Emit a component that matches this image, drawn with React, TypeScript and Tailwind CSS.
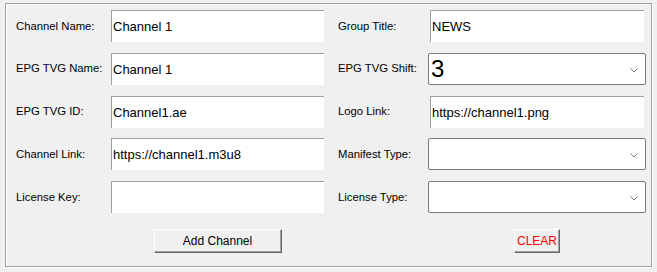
import React, { useState } from 'react';

const labelCls = "text-[11.3px] text-black self-center";
const inputCls =
  "h-[32px] w-[213px] bg-white border-t border-l border-[#a0a0a0] pl-[1px] text-[13px] text-black outline-none font-['Liberation_Sans',Arial,sans-serif]";

const Chevron: React.FC = () => (
  <svg width="8" height="5" viewBox="0 0 8 5" className="absolute right-[7px] top-[14px]">
    <path d="M0.5 0.5 L4 4 L7.5 0.5" fill="none" stroke="#7a7a7a" strokeWidth="1" />
  </svg>
);

const Combo: React.FC<{ value: string; big?: boolean }> = ({ value, big }) => (
  <div className="relative -ml-[2px] h-[32px] w-[218px] bg-white border border-[#7a7a7a] rounded-[2px] flex items-center">
    <span className={big ? "pl-[2px] text-[24px] leading-none" : "text-[13px]"}>{value}</span>
    <Chevron />
  </div>
);

const App: React.FC = () => {
  const [form, setForm] = useState({
    name: 'Channel 1',
    group: 'NEWS',
    epgName: 'Channel 1',
    epgId: 'Channel1.ae',
    logo: 'https://channel1.png',
    link: 'https://channel1.m3u8',
    key: '',
  });

  const set = (k: keyof typeof form) => (e: React.ChangeEvent<HTMLInputElement>) =>
    setForm({ ...form, [k]: e.target.value });

  return (
    <div className="w-[657px] h-[272px] bg-[#f0f0f0] pt-[3px] pl-[5px] font-['Liberation_Sans',Arial,sans-serif]">
      <div className="w-[647px] h-[264px] border border-[#a0a0a0] shadow-[inset_1px_1px_0_#ffffff,1px_1px_0_#ffffff] pt-[6px] pl-[10px]">
        {/* Fields */}
        <div className="grid grid-cols-[95px_213px_106px_214px] gap-y-[10.75px]">
          <span className={labelCls}>Channel Name:</span>
          <input className={inputCls} value={form.name} onChange={set('name')} />
          <span className={`${labelCls} pl-[14px]`}>Group Title:</span>
          <input className={`${inputCls} w-[214px]`} value={form.group} onChange={set('group')} />

          <span className={labelCls}>EPG TVG Name:</span>
          <input className={inputCls} value={form.epgName} onChange={set('epgName')} />
          <span className={`${labelCls} pl-[14px]`}>EPG TVG Shift:</span>
          <Combo value="3" big />

          <span className={labelCls}>EPG TVG ID:</span>
          <input className={inputCls} value={form.epgId} onChange={set('epgId')} />
          <span className={`${labelCls} pl-[14px]`}>Logo Link:</span>
          <input className={`${inputCls} w-[214px]`} value={form.logo} onChange={set('logo')} />

          <span className={labelCls}>Channel Link:</span>
          <input className={inputCls} value={form.link} onChange={set('link')} />
          <span className={`${labelCls} pl-[14px]`}>Manifest Type:</span>
          <Combo value="" />

          <span className={labelCls}>License Key:</span>
          <input className={inputCls} value={form.key} onChange={set('key')} />
          <span className={`${labelCls} pl-[14px]`}>License Type:</span>
          <Combo value="" />
        </div>

        {/* Buttons */}
        <div className="grid grid-cols-[95px_213px_106px_214px] mt-[16px]">
          <span />
          <div className="flex justify-center">
            <button className="h-[24px] w-[128px] bg-[#f0f0f0] border border-t-white border-l-white border-r-[#696969] border-b-[#696969] shadow-[inset_-1px_-1px_0_#a0a0a0] text-[12px] text-black">
              Add Channel
            </button>
          </div>
          <span />
          <div className="flex justify-center">
            <button className="h-[24px] w-[46px] bg-[#f0f0f0] border border-t-white border-l-white border-r-[#696969] border-b-[#696969] shadow-[inset_-1px_-1px_0_#a0a0a0] text-[12px] text-[#ff0000]">
              CLEAR
            </button>
          </div>
        </div>
      </div>
    </div>
  );
};

export default App;
